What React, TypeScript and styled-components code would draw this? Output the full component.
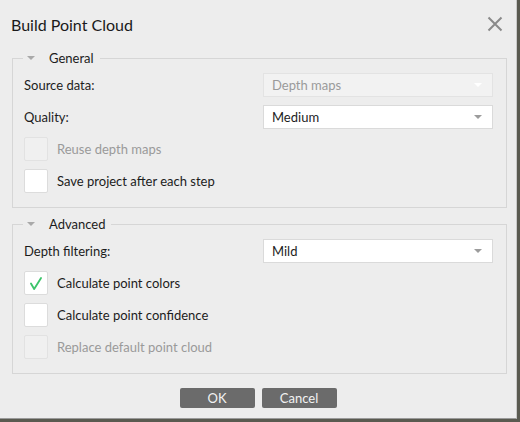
import React from 'react';
import styled, { createGlobalStyle } from 'styled-components';

const GlobalStyle = createGlobalStyle`
  html, body {
    margin: 0;
    padding: 0;
    background: #5a5a50;
  }
  body {
    font-family: "Lato", "Noto Sans", sans-serif;
    font-size: 13px;
    color: #1c1c1c;
  }
`;

const Dialog = styled.div`
  width: 516px;
  height: 418px;
  background: #ededed;
  border-right: 1px solid #c9c9c9;
  border-bottom: 1px solid #9a9a9a;
  display: flex;
  flex-direction: column;
`;

const TitleBar = styled.div`
  height: 48px;
  display: flex;
  align-items: center;
  justify-content: space-between;
  padding: 0 13px 0 11px;
`;

const Title = styled.h1`
  margin: 0;
  font-size: 16px;
  font-weight: 400;
  color: #1a1a1a;
`;

const CloseButton = styled.button`
  border: none;
  background: none;
  padding: 0;
  width: 16px;
  height: 16px;
  display: flex;
  cursor: pointer;
`;

const Group = styled.fieldset`
  margin: 0 9px 0 12px;
  padding: 5px 13px 14px 11px;
  border: 1px solid #d6d6d6;
  min-width: 0;
  display: flex;
  flex-direction: column;
  gap: 8px;
  & + & {
    margin-top: 6px;
  }
`;

const Legend = styled.legend`
  margin-left: -1px;
  padding: 0 6px 0 4px;
  height: 20px;
  line-height: 20px;
  display: flex;
  align-items: center;
  gap: 14px;
  color: #1c1c1c;
`;

const Triangle = styled.span`
  width: 0;
  height: 0;
  border-left: 4px solid transparent;
  border-right: 4px solid transparent;
  border-top: 4px solid #a9a9a9;
`;

const Row = styled.div`
  height: 24px;
  display: grid;
  grid-template-columns: 239px 1fr;
  align-items: center;
`;

const Select = styled.div<{ $disabled?: boolean }>`
  height: 24px;
  box-sizing: border-box;
  display: flex;
  align-items: center;
  justify-content: space-between;
  padding: 0 10px 0 8px;
  background: ${p => (p.$disabled ? '#f2f2f2' : '#ffffff')};
  border: 1px solid ${p => (p.$disabled ? '#e3e3e3' : '#dadada')};
  color: ${p => (p.$disabled ? '#9a9a9a' : '#1c1c1c')};
  &::after {
    content: '';
    border-left: 4px solid transparent;
    border-right: 4px solid transparent;
    border-top: 4px solid ${p => (p.$disabled ? '#ffffff' : '#9c9c9c')};
  }
`;

const CheckRow = styled.label<{ $disabled?: boolean }>`
  height: 24px;
  display: flex;
  align-items: center;
  gap: 9px;
  color: ${p => (p.$disabled ? '#9a9a9a' : '#1c1c1c')};
`;

const Box = styled.span<{ $disabled?: boolean }>`
  width: 24px;
  height: 24px;
  box-sizing: border-box;
  border-radius: 2px;
  background: ${p => (p.$disabled ? '#f0f0f0' : '#ffffff')};
  border: 1px solid ${p => (p.$disabled ? '#e2e2e2' : '#dcdcdc')};
  display: flex;
  align-items: center;
  justify-content: center;
`;

const Footer = styled.div`
  display: flex;
  justify-content: center;
  gap: 7px;
  padding-top: 14px;
`;

const Button = styled.button`
  width: 75px;
  height: 20px;
  border: none;
  border-radius: 2px;
  background: #6b6b6b;
  color: #f2f2f2;
  font-family: inherit;
  font-size: 13px;
  padding: 0;
  cursor: pointer;
`;

function Check(props: { label: string; checked?: boolean; disabled?: boolean }) {
  return (
    <CheckRow $disabled={props.disabled}>
      <Box $disabled={props.disabled}>
        {props.checked && (
          <svg width="24" height="24" viewBox="0 0 24 24">
            <path d="M6.5 12.5 L10 18.5 L17.5 6.5" fill="none" stroke="#3cc46a" strokeWidth="2" strokeLinecap="round" strokeLinejoin="round" />
          </svg>
        )}
      </Box>
      {props.label}
    </CheckRow>
  );
}

function Field(props: { label: string; value: string; disabled?: boolean }) {
  return (
    <Row>
      <span>{props.label}</span>
      <Select $disabled={props.disabled}>{props.value}</Select>
    </Row>
  );
}

export default function App() {
  return (
    <Dialog>
      <GlobalStyle />
      <TitleBar>
        <Title>Build Point Cloud</Title>
        <CloseButton aria-label="Close">
          <svg width="16" height="16" viewBox="0 0 16 16">
            <path d="M1.5 1.5 L14.5 14.5 M14.5 1.5 L1.5 14.5" stroke="#8a8a8a" strokeWidth="2" />
          </svg>
        </CloseButton>
      </TitleBar>
      <Group>
        <Legend><Triangle />General</Legend>
        <Field label="Source data:" value="Depth maps" disabled />
        <Field label="Quality:" value="Medium" />
        <Check label="Reuse depth maps" disabled />
        <Check label="Save project after each step" />
      </Group>
      <Group>
        <Legend><Triangle />Advanced</Legend>
        <Field label="Depth filtering:" value="Mild" />
        <Check label="Calculate point colors" checked />
        <Check label="Calculate point confidence" />
        <Check label="Replace default point cloud" disabled />
      </Group>
      <Footer>
        <Button>OK</Button>
        <Button>Cancel</Button>
      </Footer>
    </Dialog>
  );
}
